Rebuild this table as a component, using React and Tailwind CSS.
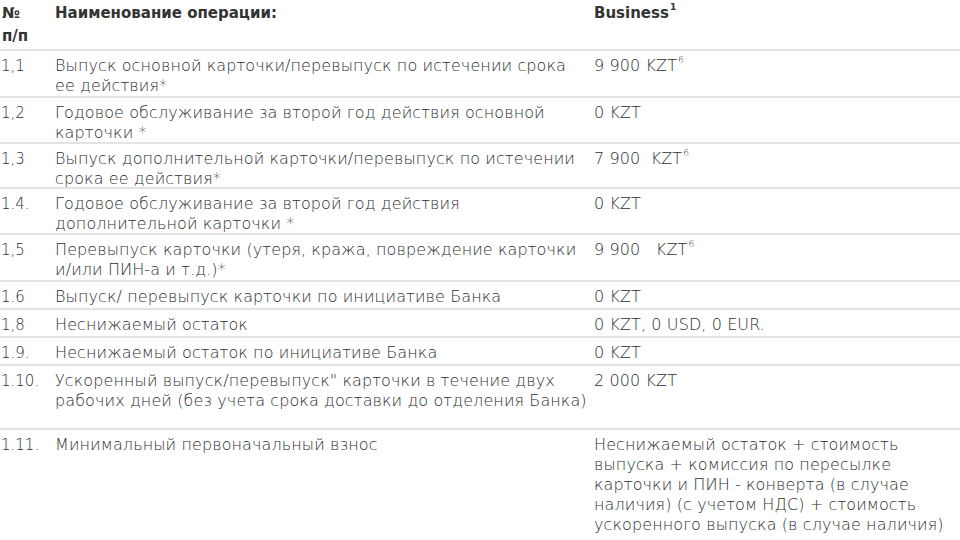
import React from "react";

const Sup = ({ c }) => <sup className="text-[9px] leading-none align-[4px] ml-[1px]">{c}</sup>;

const rows = [
  { n: "1,1", t: ["Выпуск основной карточки/перевыпуск по истечении срока", "ее действия*"], v: <>9 900 KZT<Sup c="6" /></>, h: "h-[47px]" },
  { n: "1,2", t: ["Годовое обслуживание за второй год действия основной", "карточки *"], v: <>0 KZT</>, h: "h-[46px]" },
  { n: "1,3", t: ["Выпуск дополнительной карточки/перевыпуск по истечении", "срока ее действия*"], v: <>7 900&nbsp; KZT<Sup c="6" /></>, h: "h-[45px]" },
  { n: "1.4.", t: ["Годовое обслуживание за второй год действия", "дополнительной карточки *"], v: <>0 KZT</>, h: "h-[46px]" },
  { n: "1,5", t: ["Перевыпуск карточки (утеря, кража, повреждение карточки", "и/или ПИН-а и т.д.)*"], v: <>9 900&nbsp;&nbsp; KZT<Sup c="6" /></>, h: "h-[47px]" },
  { n: "1.6", t: ["Выпуск/ перевыпуск карточки по инициативе Банка"], v: <>0 KZT</>, h: "h-[28px]" },
  { n: "1,8", t: ["Неснижаемый остаток"], v: <>0 KZT, 0 USD, 0 EUR.</>, h: "h-[28px]" },
  { n: "1.9.", t: ["Неснижаемый остаток по инициативе Банка"], v: <>0 KZT</>, h: "h-[28px]" },
  { n: "1.10.", t: ["Ускоренный выпуск/перевыпуск\" карточки в течение двух", "рабочих дней (без учета срока доставки до отделения Банка)"], v: <>2 000 KZT</>, h: "h-[64px]" },
];

export default function App() {
  return (
    <div
      className="w-[960px] h-[540px] overflow-hidden bg-white text-[#2e2e2e] text-[16px] leading-[20px] tracking-[0.1px]"
      style={{ fontFamily: '"DejaVu Sans", sans-serif' }}
    >
      <div className="flex h-[51px] border-b-2 border-[#e3e3e3] pt-[2px] font-bold text-[15px] leading-[23px] tracking-normal text-[#333]">
        <div className="w-[55px] pl-[2px]">№<br />п/п</div>
        <div className="w-[539px]">Наименование операции:</div>
        <div>Business<Sup c="1" /></div>
      </div>
      {rows.map((r, i) => (
        <div key={i} className={`flex ${r.h} border-b-2 border-[#e3e3e3] pt-[5px] font-extralight`}>
          <div className="w-[55px] pl-[1px] text-[15px] tracking-normal">{r.n}</div>
          <div className="w-[539px]">
            {r.t.map((l, j) => (
              <div key={j} className="whitespace-nowrap">{l}</div>
            ))}
          </div>
          <div className="whitespace-nowrap">{r.v}</div>
        </div>
      ))}
      <div className="flex pt-[5px] font-extralight">
        <div className="w-[55px] pl-[1px] text-[15px] tracking-normal">1.11.</div>
        <div className="w-[539px]">Минимальный первоначальный взнос</div>
        <div className="whitespace-nowrap">
          <div>Неснижаемый остаток + стоимость</div>
          <div>выпуска + комиссия по пересылке</div>
          <div>карточки и ПИН - конверта (в случае</div>
          <div>наличия) (с учетом НДС) + стоимость</div>
          <div>ускоренного выпуска (в случае наличия)</div>
        </div>
      </div>
    </div>
  );
}
